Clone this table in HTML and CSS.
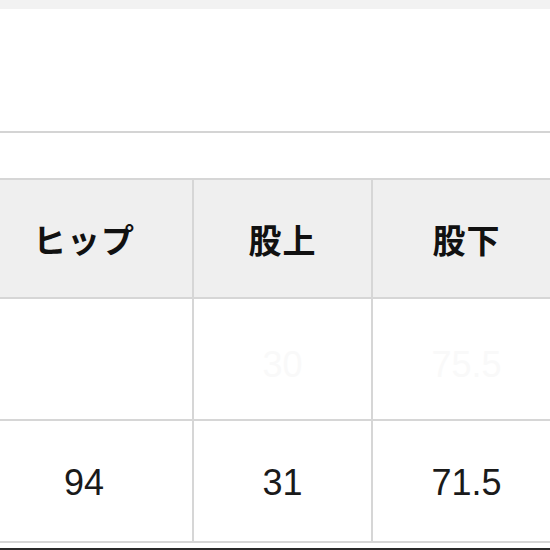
FILE: index.html
```html
<!DOCTYPE html>
<html lang="ja">
<head>
<meta charset="utf-8">
<link rel="stylesheet" href="styles.css">
</head>
<body>
<div class="page">
  <div class="topbar"></div>
  <div class="panel"></div>
  <div class="spacer"></div>
  <div class="table">
    <div class="cell head">ヒップ</div>
    <div class="cell head">股上</div>
    <div class="cell head">股下</div>
    <div class="cell faint"></div>
    <div class="cell faint">30</div>
    <div class="cell faint">75.5</div>
    <div class="cell num">94</div>
    <div class="cell num">31</div>
    <div class="cell num">71.5</div>
  </div>
  <div class="gap"></div>
  <div class="darkbar"></div>
</div>
</body>
</html>
```
FILE: styles.css
```css
html, body {
  margin: 0;
  padding: 0;
  background: #ffffff;
}
.page {
  width: 550px;
  height: 550px;
  overflow: hidden;
  display: flex;
  flex-direction: column;
}
.topbar {
  height: 9px;
  background: #f2f2f2;
  flex: none;
}
.panel {
  height: 122px;
  border-bottom: 2px solid #d4d4d4;
  background: #ffffff;
  flex: none;
}
.spacer {
  height: 45px;
  flex: none;
}
.table {
  flex: none;
  margin-left: -12px;
  width: 572px;
  display: grid;
  grid-template-columns: 204px 177px 187px;
  grid-template-rows: 117px 120px 120px;
  gap: 2px;
  padding: 2px 0;
  background: #d6d6d6;
}
.cell {
  display: flex;
  align-items: center;
  justify-content: center;
  background: #ffffff;
  font-family: "Liberation Sans", "Noto Sans CJK JP", sans-serif;
  color: #1a1a1a;
}
.cell:nth-child(3n+1) {
  padding-right: 12px;
}
.head {
  background: #efefef;
  font-family: "Noto Sans CJK JP", sans-serif;
  font-weight: 700;
  font-size: 33px;
  letter-spacing: 1px;
  color: #111111;
}
.faint {
  font-size: 36px;
  color: #f9f9f9;
  padding-top: 12px;
}
.num {
  font-size: 36px;
  color: #1a1a1a;
  padding-top: 3px;
}
.gap {
  height: 5px;
  flex: none;
}
.darkbar {
  height: 2px;
  background: #2a2a2a;
  flex: none;
}
```
